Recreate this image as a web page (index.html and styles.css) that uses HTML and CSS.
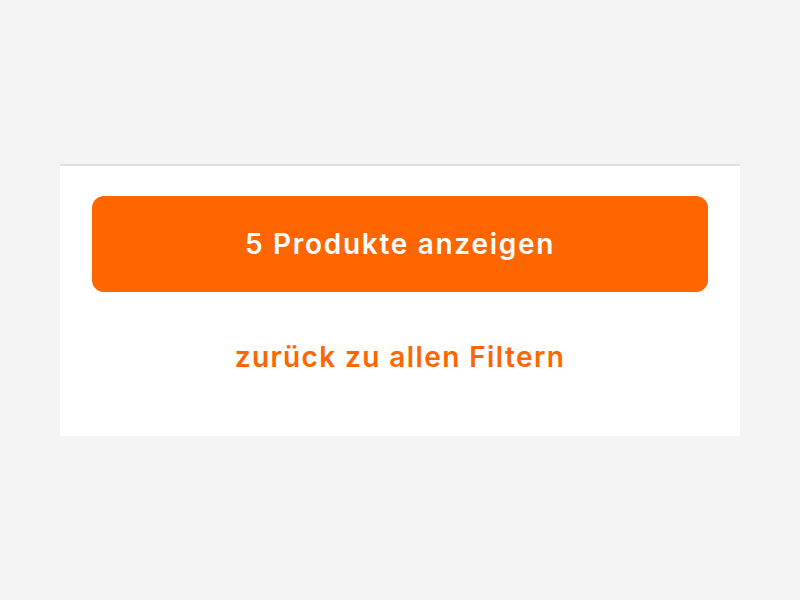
FILE: index.html
```html
<!DOCTYPE html>
<html lang="de">
<head>
    <meta charset="UTF-8">
    <meta name="viewport" content="width=device-width, initial-scale=1.0">
    <title>Filter</title>
    <link rel="stylesheet" href="styles.css">
</head>
<body>
    <div class="filter-footer">
        <button class="show-btn" type="button">5 Produkte anzeigen</button>
        <a class="back-link" href="#">zurück zu allen Filtern</a>
    </div>
</body>
</html>
```

FILE: styles.css
```css
body{
    margin: 0;
    background: #f4f4f4;
    font-family: Inter, "Liberation Sans", Arial, sans-serif;
    padding-top: 164px;
}

.filter-footer{
    margin: 0 60px;
    background: white;
    border-top: 2px solid #e0e0e0;
    padding: 30px 32px 58px;
    display: flex;
    flex-direction: column;
    align-items: center;
}

.show-btn{
    width: 100%;
    height: 96px;
    border: none;
    border-radius: 12px;
    background: #ff6600;
    color: white;
    font-family: inherit;
    font-size: 28px;
    font-weight: 600;
    letter-spacing: 1.7px;
    cursor: pointer;
}

.back-link{
    margin-top: 44px;
    line-height: 42px;
    color: #ff6600;
    font-size: 28px;
    font-weight: 600;
    letter-spacing: 1.4px;
    text-decoration: none;
}
```
